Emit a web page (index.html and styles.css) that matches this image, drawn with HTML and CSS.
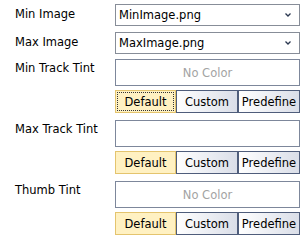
FILE: index.html
```
<!DOCTYPE html>
<html>
<head>
    <title>Slider Properties</title>
    <link rel="stylesheet" href="styles.css">
</head>
<body>
    <div class="panel">
        <div class="row row-combo">
            <label class="caption">Min Image</label>
            <div class="combo">
                <span>MinImage.png</span>
                <svg class="chevron" width="6" height="4" viewBox="0 0 6 4"><path d="M0.5 0.5 L3 3 L5.5 0.5" fill="none" stroke="#2b3850" stroke-width="1.3"/></svg>
            </div>
        </div>
        <div class="row row-combo">
            <label class="caption">Max Image</label>
            <div class="combo">
                <span>MaxImage.png</span>
                <svg class="chevron" width="6" height="4" viewBox="0 0 6 4"><path d="M0.5 0.5 L3 3 L5.5 0.5" fill="none" stroke="#2b3850" stroke-width="1.3"/></svg>
            </div>
        </div>
        <div class="row row-tint">
            <label class="caption">Min Track Tint</label>
            <div class="tint">
                <div class="swatch">No Color</div>
                <div class="choices">
                    <button class="choice choice-default focused">Default</button>
                    <button class="choice">Custom</button>
                    <button class="choice">Predefine</button>
                </div>
            </div>
        </div>
        <div class="row row-tint">
            <label class="caption">Max Track Tint</label>
            <div class="tint">
                <div class="swatch"></div>
                <div class="choices">
                    <button class="choice choice-default">Default</button>
                    <button class="choice">Custom</button>
                    <button class="choice">Predefine</button>
                </div>
            </div>
        </div>
        <div class="row row-tint">
            <label class="caption">Thumb Tint</label>
            <div class="tint">
                <div class="swatch">No Color</div>
                <div class="choices">
                    <button class="choice choice-default">Default</button>
                    <button class="choice">Custom</button>
                    <button class="choice">Predefine</button>
                </div>
            </div>
        </div>
    </div>
</body>
</html>
```
FILE: styles.css
```
body {
    margin: 0;
    background-color: #fff;
    font-family: "DejaVu Sans", sans-serif;
    font-size: 11.5px;
    color: #000;
}
.panel {
    display: flex;
    flex-direction: column;
    padding: 4px 0 0 15px;
}
.row {
    display: grid;
    grid-template-columns: 100px 185px;
}
.row-combo + .row-combo {
    margin-top: 6px;
}
.row-tint {
    margin-top: 7px;
}
.row-combo + .row-tint {
    margin-top: 5px;
}
.caption {
    line-height: 16px;
    padding-top: 1px;
}
.row-combo .caption {
    line-height: 20px;
    padding-top: 0;
}
.combo {
    height: 22px;
    box-sizing: border-box;
    border: 1px solid #878d98;
    display: flex;
    align-items: center;
    justify-content: space-between;
    padding: 0 8px 0 3px;
}
.chevron {
    display: block;
}
.swatch {
    height: 27px;
    box-sizing: border-box;
    border: 1px solid #7d879b;
    display: flex;
    align-items: center;
    justify-content: center;
    color: #a3a3a3;
}
.choices {
    display: grid;
    grid-template-columns: 61px 62px 62px;
    height: 23px;
    margin-top: 4px;
}
.choice {
    font: inherit;
    color: #000;
    padding: 0;
    border: 1px solid #4f5d7b;
    background: linear-gradient(to right, #ffffff, #dadee8);
    white-space: nowrap;
    overflow: hidden;
}
.choice-default {
    background: #fff1c2;
    border-color: #e4c46e;
}
.focused {
    outline: 1px dotted #333;
    outline-offset: -3px;
}
```
